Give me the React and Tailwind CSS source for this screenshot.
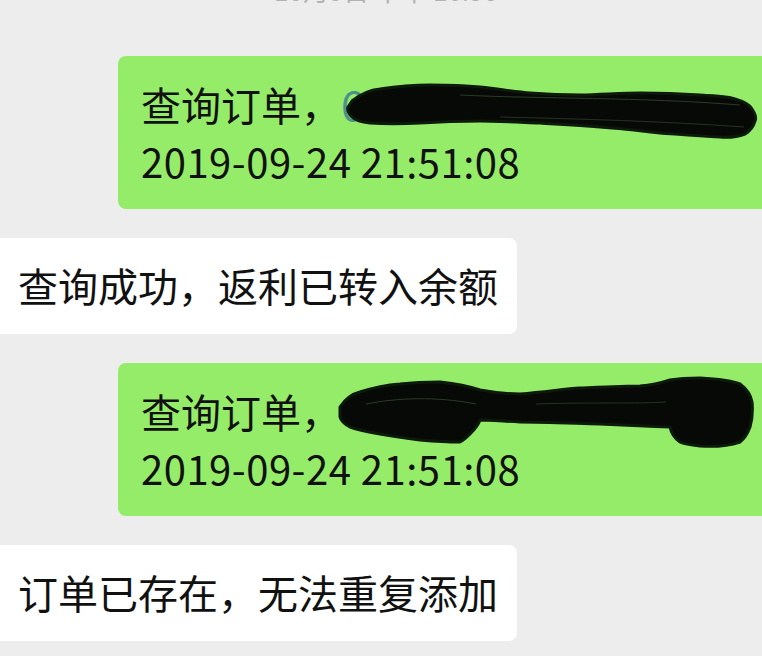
import React from "react";

const FONT = { fontFamily: '"Noto Sans CJK SC", "Noto Sans", sans-serif' };

// rough ink blobs that cover the order numbers
const Scribble1 = () => (
  <svg
    className="absolute left-[222px] top-[25px]"
    width="424"
    height="64"
    viewBox="0 0 424 64"
  >
    <path
      d="M12 20 C22 12 30 9 40 8 C60 5 80 4 90 4 C115 4 130 5 140 6 C165 9 178 11 190 12 C215 14 228 14 240 14 C270 13 285 12 300 12 C330 12 345 13 360 14 C380 15 390 16 395 18 C405 21 410 24 412 28 C416 34 416 38 415 40 C413 47 410 50 405 53 C397 56 390 57 380 56 C355 55 335 53 320 52 C295 49 275 47 260 46 C235 44 215 43 200 42 C175 41 155 40 140 40 C115 40 95 41 80 42 C60 43 45 43 30 42 C20 41 15 39 12 36 C8 32 7 29 8 26 Z"
      fill="#060906"
      stroke="#0d1a0b"
      strokeWidth="3"
      strokeLinejoin="round"
    />
    <path d="M120 14 C200 18 300 16 400 24" stroke="#2b3b27" strokeWidth="1" fill="none" />
    <path d="M160 36 C240 38 320 40 404 46" stroke="#253322" strokeWidth="1" fill="none" />
  </svg>
);

const Scribble2 = () => (
  <svg
    className="absolute left-[218px] top-[11px]"
    width="424"
    height="78"
    viewBox="0 0 424 78"
  >
    <path
      d="M4 33 C10 24 16 20 24 18 C40 13 52 11 64 10 C82 8 95 8 104 8 C122 10 135 13 144 16 C160 19 172 20 184 20 C210 18 228 15 244 14 C268 13 290 12 304 12 C318 11 328 8 334 6 C346 4 356 4 364 4 C382 5 396 7 404 10 C412 16 415 22 416 28 C417 38 416 46 414 53 C411 61 408 65 404 68 C392 72 378 73 364 72 C355 71 348 70 344 68 C338 64 335 58 334 53 C310 52 285 51 264 50 C230 49 205 48 184 48 C165 47 152 46 144 46 C142 52 138 56 134 60 C130 64 128 66 124 68 C110 68 96 67 84 66 C68 64 55 62 44 60 C32 58 22 56 14 53 C8 50 5 47 4 43 Z"
      fill="#060906"
      stroke="#0d1a0b"
      strokeWidth="3"
      strokeLinejoin="round"
    />
    <path d="M30 30 C60 24 100 22 140 30" stroke="#2b3b27" strokeWidth="1" fill="none" />
    <path d="M200 30 C260 28 300 30 330 28" stroke="#253322" strokeWidth="1" fill="none" />
  </svg>
);

function SentBubble({ children }) {
  return (
    <div className="relative ml-[118px] w-[680px] rounded-lg bg-[#95ec69] pl-[23px] pt-[20px] pb-[19px] text-[40px] leading-[57px] text-[#111111]">
      {children}
    </div>
  );
}

function RecvBubble({ text }) {
  return (
    <div className="w-[517px] rounded-r-lg bg-white pl-[18px] pt-[19px] pb-[20px] text-[40px] leading-[57px] text-[#111111] whitespace-nowrap">
      {text}
    </div>
  );
}

export default function App() {
  return (
    <div className="h-[656px] w-full overflow-hidden bg-[#ededed]" style={FONT}>
      <div className="h-[6px] overflow-hidden">
        <div className="-mt-[26px] text-center text-[26px] leading-[32px] text-[#b2b2b2] pl-[10px]">
          10月9日 下午 16:50
        </div>
      </div>

      <div className="mt-[50px] flex flex-col gap-[29px]">
        <SentBubble>
          <div className="whitespace-nowrap">
            查询订单，<span className="text-[#4d8f8a]">6</span>
          </div>
          <div className="whitespace-nowrap tracking-[0.5px]">2019-09-24 21:51:08</div>
          <Scribble1 />
        </SentBubble>

        <RecvBubble text="查询成功，返利已转入余额" />

        <SentBubble>
          <div className="whitespace-nowrap">查询订单，</div>
          <div className="whitespace-nowrap tracking-[0.5px]">2019-09-24 21:51:08</div>
          <Scribble2 />
        </SentBubble>

        <RecvBubble text="订单已存在，无法重复添加" />
      </div>
    </div>
  );
}
